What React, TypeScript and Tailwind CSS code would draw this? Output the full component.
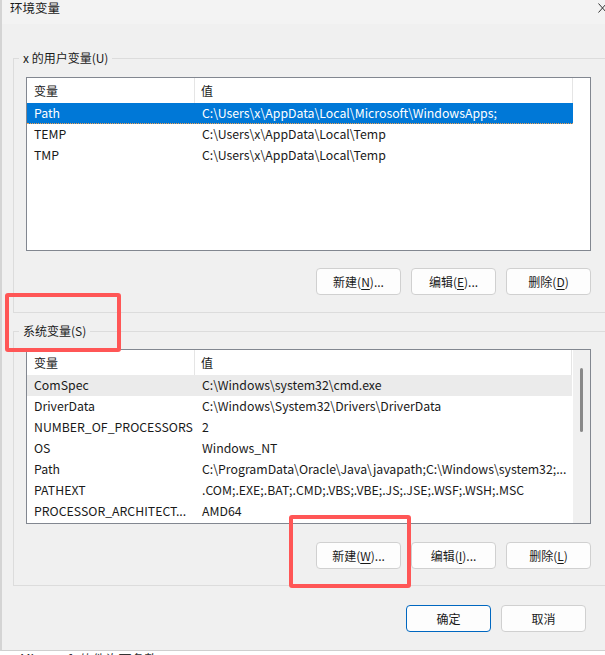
import React from "react";

const font = { fontFamily: "'Noto Sans CJK SC', 'Noto Sans', sans-serif" };

type Row = [string, string];

const userRows: Row[] = [
  ["Path", "C:\\Users\\x\\AppData\\Local\\Microsoft\\WindowsApps;"],
  ["TEMP", "C:\\Users\\x\\AppData\\Local\\Temp"],
  ["TMP", "C:\\Users\\x\\AppData\\Local\\Temp"],
];

const sysRows: Row[] = [
  ["ComSpec", "C:\\Windows\\system32\\cmd.exe"],
  ["DriverData", "C:\\Windows\\System32\\Drivers\\DriverData"],
  ["NUMBER_OF_PROCESSORS", "2"],
  ["OS", "Windows_NT"],
  ["Path", "C:\\ProgramData\\Oracle\\Java\\javapath;C:\\Windows\\system32;..."],
  ["PATHEXT", ".COM;.EXE;.BAT;.CMD;.VBS;.VBE;.JS;.JSE;.WSF;.WSH;.MSC"],
  ["PROCESSOR_ARCHITECT...", "AMD64"],
];

function Btn({ pre, key1, post, primary }: { pre: string; key1?: string; post?: string; primary?: boolean }) {
  return (
    <div
      className={`w-[85px] h-[27px] flex items-center justify-center rounded-[4px] bg-[#fdfdfd] text-[12px] text-[#1a1a1a] border ${
        primary ? "border-[#0067c0]" : "border-[#d0d0d0]"
      }`}
    >
      <span>
        {pre}
        {key1 !== undefined && (
          <>
            (<span className="underline underline-offset-2">{key1}</span>){post}
          </>
        )}
      </span>
    </div>
  );
}

function ListView({ rows, height, selected, hover, scroll }: { rows: Row[]; height: number; selected?: number; hover?: number; scroll?: boolean }) {
  return (
    <div className="border border-[#828790] bg-white flex" style={{ height }}>
      <div className="w-[546px] flex flex-col">
        <div className="h-[25px] flex text-[12px] text-[#1a1a1a] shrink-0">
          <div className="w-[168px] pl-[7px] flex items-center border-r border-[#e5e5e5]">变量</div>
          <div className="flex-1 pl-[6px] flex items-center border-r border-[#e5e5e5]">值</div>
        </div>
        {rows.map((r, i) => (
          <div
            key={i}
            className={`h-[21px] flex items-center text-[12.3px] whitespace-nowrap ${
              i === selected
                ? "bg-[#0078d7] text-white border-b border-dotted border-[#f0a050]"
                : i === hover
                ? "bg-[#ebebeb] text-[#1a1a1a]"
                : "text-[#1a1a1a]"
            }`}
          >
            <div className="w-[168px] shrink-0 pl-[7px]">{r[0]}</div>
            <div className="flex-1 pl-[7px]">{r[1]}</div>
          </div>
        ))}
      </div>
      {scroll ? (
        <div className="w-[17px] ml-[1px] bg-[#f0f0f0] flex justify-center pt-[18px]">
          <div className="w-[3px] h-[64px] bg-[#8a8a8a] rounded-full" />
        </div>
      ) : null}
    </div>
  );
}

function GroupBox({ label, children, className }: { label: string; children: React.ReactNode; className?: string }) {
  return (
    <div className={`relative border border-[#dcdcdc] w-[600px] pl-[12px] pr-[21px] ${className ?? ""}`}>
      <span className="absolute left-[5px] top-[-9px] px-[4px] bg-[#f0f0f0] text-[12px] leading-[16px] text-[#1a1a1a]">
        {label}
      </span>
      {children}
    </div>
  );
}

export default function App() {
  return (
    <div className="w-[605px] h-[655px] bg-white relative overflow-hidden" style={font}>
      <div className="h-[651px] bg-[#f0f0f0] border-l-2 border-l-[#d4d4d4] border-b border-b-[#cfcfcf] flex flex-col overflow-hidden">
        <div className="h-[24px] bg-[#f3f3f3] flex items-start justify-between pl-[8px] pr-0 shrink-0">
          <span className="text-[12.5px] leading-[16px] text-[#1a1a1a]">环境变量</span>
          <svg width="9" height="10" viewBox="0 0 9 10" className="mt-[3px] -mr-[2px]">
            <path d="M0.5 0.5 L8.5 9.5 M8.5 0.5 L0.5 9.5" stroke="#333" strokeWidth="1" />
          </svg>
        </div>
        <div className="pl-[11px] flex flex-col">
          <GroupBox label="x 的用户变量(U)" className="mt-[34px] pt-[18px] pb-[17px]">
            <ListView rows={userRows} height={174} selected={0} />
            <div className="flex justify-end gap-[10px] mt-[17px]">
              <Btn pre="新建" key1="N" post="..." />
              <Btn pre="编辑" key1="E" post="..." />
              <Btn pre="删除" key1="D" post="" />
            </div>
          </GroupBox>
          <GroupBox label="系统变量(S)" className="mt-[18px] pt-[17px] pb-[16px]">
            <ListView rows={sysRows} height={175} hover={0} scroll />
            <div className="flex justify-end gap-[10px] mt-[18px]">
              <Btn pre="新建" key1="W" post="..." />
              <Btn pre="编辑" key1="I" post="..." />
              <Btn pre="删除" key1="L" post="" />
            </div>
          </GroupBox>
          <div className="flex justify-end gap-[10px] mt-[19px] pr-[21px] w-[594px]">
            <Btn pre="确定" primary />
            <Btn pre="取消" />
          </div>
        </div>
      </div>
      <div className="pl-[20px] text-[13px] leading-[16px] text-[#333]">Microsoft 软件许可条款</div>

      <div className="absolute left-[5px] top-[293px] w-[116px] h-[59px] border-4 border-[#ff5656] rounded-[3px]" />
      <div className="absolute left-[289px] top-[515px] w-[122px] h-[73px] border-4 border-[#ff5656] rounded-[3px]" />
    </div>
  );
}
